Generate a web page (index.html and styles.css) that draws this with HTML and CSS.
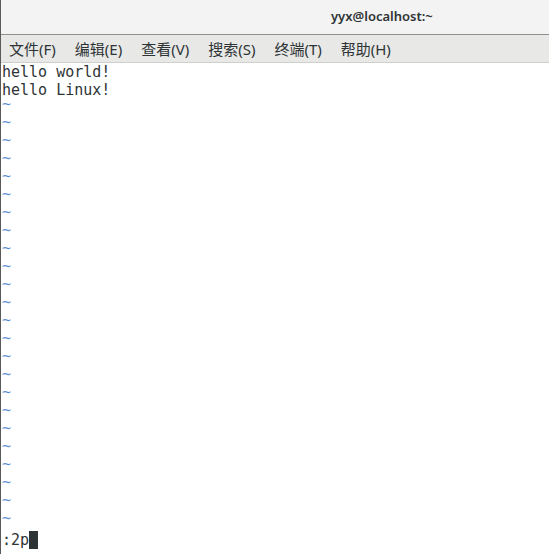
FILE: index.html
```html
<!DOCTYPE html>
<html lang="zh-CN">
<head>
  <meta charset="UTF-8">
  <meta name="viewport" content="width=device-width, initial-scale=1.0">
  <title>yyx@localhost:~</title>
  <link rel="stylesheet" href="styles.css">
</head>
<body>
  <div class="window">

    <div class="titlebar">
      <span class="title">yyx@localhost:~</span>
    </div>

    <div class="menubar">
      <span class="menu-item">文件(F)</span>
      <span class="menu-item">编辑(E)</span>
      <span class="menu-item">查看(V)</span>
      <span class="menu-item">搜索(S)</span>
      <span class="menu-item">终端(T)</span>
      <span class="menu-item">帮助(H)</span>
    </div>

    <div class="screen">
      <div class="line">hello world!</div>
      <div class="line">hello Linux!</div>
      <div class="line"><span class="tilde">~</span></div>
      <div class="line"><span class="tilde">~</span></div>
      <div class="line"><span class="tilde">~</span></div>
      <div class="line"><span class="tilde">~</span></div>
      <div class="line"><span class="tilde">~</span></div>
      <div class="line"><span class="tilde">~</span></div>
      <div class="line"><span class="tilde">~</span></div>
      <div class="line"><span class="tilde">~</span></div>
      <div class="line"><span class="tilde">~</span></div>
      <div class="line"><span class="tilde">~</span></div>
      <div class="line"><span class="tilde">~</span></div>
      <div class="line"><span class="tilde">~</span></div>
      <div class="line"><span class="tilde">~</span></div>
      <div class="line"><span class="tilde">~</span></div>
      <div class="line"><span class="tilde">~</span></div>
      <div class="line"><span class="tilde">~</span></div>
      <div class="line"><span class="tilde">~</span></div>
      <div class="line"><span class="tilde">~</span></div>
      <div class="line"><span class="tilde">~</span></div>
      <div class="line"><span class="tilde">~</span></div>
      <div class="line"><span class="tilde">~</span></div>
      <div class="line"><span class="tilde">~</span></div>
      <div class="line"><span class="tilde">~</span></div>
      <div class="line"><span class="tilde">~</span></div>
      <div class="line command">:2p<span class="cursor"></span></div>
    </div>

  </div>
</body>
</html>
```

FILE: styles.css
```css
* {
  box-sizing: border-box;
}

body {
  margin: 0;
  background: #ffffff;
}

.window {
  display: flex;
  flex-direction: column;
  width: 549px;
  height: 554px;
  border-left: 1px solid #5a5a5a;
  overflow: hidden;
}

.titlebar {
  display: flex;
  align-items: center;
  height: 35px;
  padding-left: 330px;
  background: #f3f3f3;
  border-bottom: 1px solid #8f8f8f;
}

.title {
  font-family: "Noto Sans", "Open Sans", sans-serif;
  font-size: 13px;
  font-weight: 600;
  color: #2e3436;
  padding-bottom: 3px;
}

.menubar {
  display: flex;
  align-items: center;
  gap: 19px;
  height: 28px;
  padding-left: 8px;
  background: #e8e8e7;
  border-bottom: 1px solid #cfcfcd;
}

.menu-item {
  font-family: "Noto Sans", "Noto Sans CJK SC", sans-serif;
  font-size: 15px;
  color: #2e3436;
}

.screen {
  flex: 1;
  padding-left: 1px;
  background: #ffffff;
  font-family: "DejaVu Sans Mono", monospace;
  font-size: 15px;
  line-height: 18px;
  color: #2e3436;
}

.line {
  height: 18px;
  white-space: pre;
}

.tilde {
  display: inline-block;
  color: #5f8fd7;
  transform: translateY(-4px);
}

.command {
  display: flex;
  align-items: center;
}

.cursor {
  display: inline-block;
  width: 9px;
  height: 18px;
  background: #2e3436;
}
```
